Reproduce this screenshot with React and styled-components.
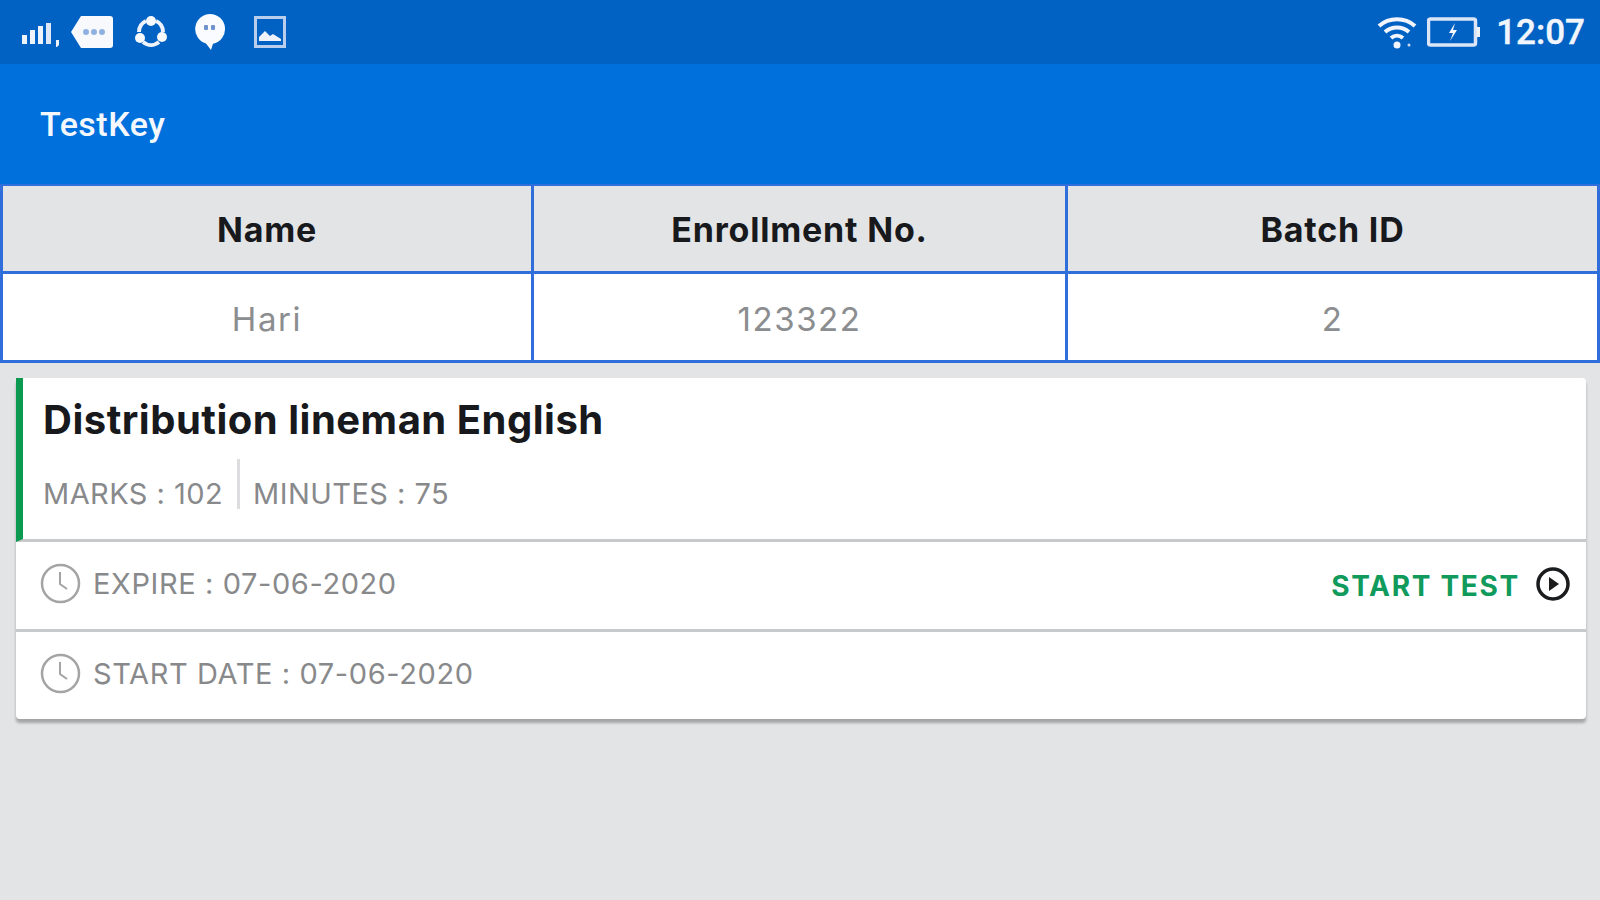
import React from 'react';
import styled, { createGlobalStyle } from 'styled-components';

const GlobalStyle = createGlobalStyle`
  html, body {
    margin: 0;
    padding: 0;
    height: 100%;
    background: #e3e4e6;
    font-family: Inter, Roboto, "Liberation Sans", sans-serif;
  }
  * {
    box-sizing: border-box;
  }
`;

const Screen = styled.div`
  width: 1600px;
  height: 900px;
  overflow: hidden;
  background: #e3e4e6;
`;

const StatusBar = styled.div`
  height: 64px;
  padding: 0 15px 0 20px;
  display: flex;
  align-items: center;
  justify-content: space-between;
  background: #0162c4;
  color: #f2f6fc;
`;

const IconGroup = styled.div`
  display: flex;
  align-items: center;
`;

const IconSlot = styled.span`
  display: flex;
  margin-left: ${(p) => p.$left || 0}px;
`;

const Clock = styled.span`
  margin-left: 15px;
  font-family: Roboto, sans-serif;
  font-size: 35px;
  font-weight: 500;
  -webkit-text-stroke: 0.4px #f2f6fc;
`;

const AppBar = styled.div`
  height: 120px;
  padding: 0 0 0 40px;
  display: flex;
  align-items: center;
  background: #0070dd;
  color: #f4f8fd;
  font-family: Roboto, sans-serif;
  font-size: 34px;
  font-weight: 500;
  letter-spacing: 0.5px;
`;

const Table = styled.div`
  display: grid;
  grid-template-columns: 531px 534px 1fr;
  border-top: 3px solid #2f6edb;
  border-left: 3px solid #2f6edb;
`;

const Cell = styled.div`
  height: ${(p) => (p.$head ? 88 : 89)}px;
  margin-top: ${(p) => (p.$head ? -1 : 0)}px;
  padding-top: ${(p) => (p.$head ? 2 : 4)}px;
  display: flex;
  align-items: center;
  justify-content: center;
  border-right: 3px solid #2f6edb;
  border-bottom: 3px solid #2f6edb;
  background: ${(p) => (p.$head ? '#e3e4e6' : '#ffffff')};
  color: ${(p) => (p.$head ? '#17191c' : '#8b8d8f')};
  font-size: ${(p) => (p.$head ? 34 : 33)}px;
  font-weight: ${(p) => (p.$head ? 700 : 400)};
  letter-spacing: ${(p) => (p.$head ? 0.8 : 1.6)}px;
`;

const Card = styled.div`
  margin: 15px 14px 0 16px;
  background: #ffffff;
  border-radius: 4px;
  box-shadow: 0 4px 3px rgba(0, 0, 0, 0.28);
`;

const CardHead = styled.div`
  height: 164px;
  padding: 17px 0 0 20px;
  border-left: 7px solid #0b9a50;
  border-bottom: 3px solid #c8c9ca;
`;

const Title = styled.div`
  color: #17191c;
  font-size: 40px;
  font-weight: 700;
  line-height: 50px;
  letter-spacing: 0.5px;
`;

const Meta = styled.div`
  margin-top: 14px;
  display: flex;
  align-items: flex-end;
  color: #88898b;
  font-size: 29px;
  line-height: 30px;
  letter-spacing: 0.45px;
`;

const Divider = styled.span`
  width: 3px;
  height: 50px;
  margin: 0 13px 0 14px;
  background: #dddddf;
`;

const Row = styled.div`
  height: ${(p) => (p.$last ? 87 : 90)}px;
  padding: 0 16px 4px 24px;
  display: flex;
  align-items: center;
  justify-content: space-between;
  border-bottom: ${(p) => (p.$last ? 'none' : '3px solid #c8c9ca')};
`;

const RowLabel = styled.div`
  display: flex;
  align-items: center;
  gap: 12px;
  color: #88898b;
  font-size: 29px;
  letter-spacing: 0.6px;
`;

const StartTest = styled.div`
  display: flex;
  align-items: center;
  gap: 16px;
  color: #109a5c;
  font-size: 28px;
  font-weight: 700;
  letter-spacing: 1.7px;
`;

const StartLabel = styled.span`
  padding-top: 4px;
`;

const SignalIcon = () => (
  <svg width="42" height="30" viewBox="0 0 42 30" fill="#eef2fb">
    <rect x="2" y="18" width="5" height="9" />
    <rect x="10" y="13" width="5" height="14" />
    <rect x="18" y="9" width="5" height="18" />
    <rect x="26" y="6" width="5" height="21" fill="#dfe6f6" />
    <path d="M36 23h3v5l-2 2h-1z" />
  </svg>
);

const MessageIcon = () => (
  <svg width="44" height="34" viewBox="0 0 44 34">
    <path d="M11 1h29a3 3 0 0 1 3 3v26a3 3 0 0 1-3 3H11L1 17z" fill="#f7f9fd" />
    <circle cx="16" cy="17" r="3" fill="#8fb1e2" />
    <circle cx="24" cy="17" r="3" fill="#8fb1e2" />
    <circle cx="32" cy="17" r="3" fill="#8fb1e2" />
  </svg>
);

const SyncIcon = () => (
  <svg width="34" height="34" viewBox="0 0 34 34" fill="none">
    <path d="M5 17A12 12 0 0 1 12 6" stroke="#eef2fb" strokeWidth="4" />
    <path d="M22 6a12 12 0 0 1 7 11" stroke="#eef2fb" strokeWidth="4" />
    <path d="M9 27c5 4 11 4 16 0" stroke="#eef2fb" strokeWidth="4" />
    <circle cx="17" cy="6" r="5" fill="#f7f9fd" />
    <circle cx="6" cy="23" r="5" fill="#f7f9fd" />
    <circle cx="28" cy="22" r="5" fill="#f7f9fd" />
  </svg>
);

const BubbleIcon = () => (
  <svg width="32" height="38" viewBox="0 0 32 38">
    <path d="M16 1a15 15 0 0 1 3 29.700L17 37l-5-6.600A15 15 0 0 1 16 1z" fill="#f9fbfe" />
    <rect x="10" y="12" width="4" height="5" rx="1" fill="#6d93cc" />
    <rect x="17" y="12" width="4" height="5" rx="1" fill="#6d93cc" />
  </svg>
);

const PictureIcon = () => (
  <svg width="32" height="32" viewBox="0 0 32 32">
    <rect x="1.500" y="1.500" width="29" height="29" fill="none" stroke="#b9cdec" strokeWidth="3" />
    <path d="M5 25v-4l6-6 5 5 3-2 8 5v2z" fill="#eef2fb" />
  </svg>
);

const WifiIcon = () => (
  <svg width="40" height="34" viewBox="0 0 40 34" fill="none" stroke="#f2f6fc" strokeWidth="4">
    <path d="M2 11c10-9 26-9 36 0" />
    <path d="M8 17c7-6 17-6 24 0" />
    <path d="M14 23c3.500-3 8.500-3 12 0" />
    <circle cx="20" cy="30" r="3.500" fill="#f2f6fc" stroke="none" />
    <circle cx="32" cy="30" r="1.500" fill="#c8d8f0" stroke="none" />
  </svg>
);

const BatteryIcon = () => (
  <svg width="54" height="30" viewBox="0 0 54 30">
    <rect x="1.500" y="2" width="47" height="26" rx="2" fill="none" stroke="#dbe5f6" strokeWidth="3.500" />
    <rect x="50" y="10" width="3" height="10" fill="#eef2fb" />
    <path d="M28 6l-6 10h4l-3 8 7-11h-4z" fill="#f7f9fd" />
  </svg>
);

const ClockIcon = () => (
  <svg width="41" height="41" viewBox="0 0 41 41" fill="none" stroke="#a3a4a6" strokeWidth="2.500">
    <circle cx="20.500" cy="20.500" r="18.500" />
    <path d="M20 9v12l7 5" strokeWidth="2" />
  </svg>
);

const PlayIcon = () => (
  <svg width="34" height="34" viewBox="0 0 34 34">
    <circle cx="17" cy="17" r="15" fill="none" stroke="#1b1c1e" strokeWidth="3.500" />
    <path d="M13 10l10 7-10 7z" fill="#1b1c1e" />
  </svg>
);

const App = () => {
  return (
    <Screen>
      <GlobalStyle />
      <StatusBar>
        <IconGroup>
          <IconSlot><SignalIcon /></IconSlot>
          <IconSlot $left={8}><MessageIcon /></IconSlot>
          <IconSlot $left={20}><SyncIcon /></IconSlot>
          <IconSlot $left={26}><BubbleIcon /></IconSlot>
          <IconSlot $left={28}><PictureIcon /></IconSlot>
        </IconGroup>
        <IconGroup>
          <IconSlot><WifiIcon /></IconSlot>
          <IconSlot $left={10}><BatteryIcon /></IconSlot>
          <Clock>12:07</Clock>
        </IconGroup>
      </StatusBar>
      <AppBar>TestKey</AppBar>
      <Table>
        <Cell $head>Name</Cell>
        <Cell $head>Enrollment No.</Cell>
        <Cell $head>Batch ID</Cell>
        <Cell>Hari</Cell>
        <Cell>123322</Cell>
        <Cell>2</Cell>
      </Table>
      <Card>
        <CardHead>
          <Title>Distribution lineman English</Title>
          <Meta>
            <span>MARKS : 102</span>
            <Divider />
            <span>MINUTES : 75</span>
          </Meta>
        </CardHead>
        <Row>
          <RowLabel>
            <ClockIcon />
            EXPIRE : 07-06-2020
          </RowLabel>
          <StartTest>
            <StartLabel>START TEST</StartLabel>
            <PlayIcon />
          </StartTest>
        </Row>
        <Row $last>
          <RowLabel>
            <ClockIcon />
            START DATE : 07-06-2020
          </RowLabel>
        </Row>
      </Card>
    </Screen>
  );
};

export default App;
